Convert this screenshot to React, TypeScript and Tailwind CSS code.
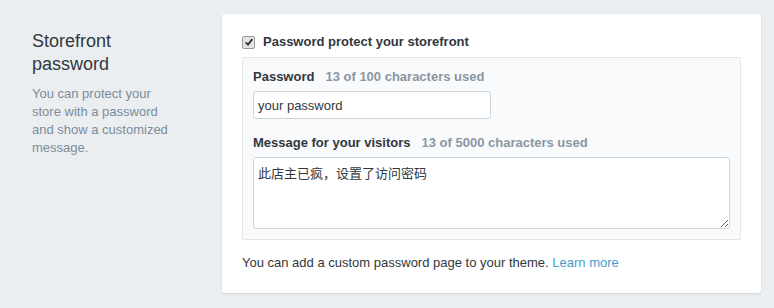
export default function App() {
  return (
    <div className="min-h-[308px] w-[774px] bg-[#ebeef0] pl-[32px] pt-[14px] font-['Liberation_Sans',Arial,sans-serif] text-[13px] text-[#31373d]">
      <div className="flex">
        <div className="w-[190px] shrink-0 pt-[16px]">
          <h2 className="w-[145px] text-[18px] leading-[23px] text-[#31373d]">Storefront password</h2>
          <p className="mt-[9px] w-[145px] leading-[18px] text-[#798c9c]">
            You can protect your store with a password and show a customized message.
          </p>
        </div>
        <div className="w-[539px] rounded-[3px] bg-white px-[20px] pb-[20px] pt-[18px] shadow-[0_1px_2px_rgba(0,0,0,0.12)]">
          <label className="flex h-[20px] items-center gap-[8px] font-bold">
            <span className="flex h-[13px] w-[13px] items-center justify-center rounded-[2px] border border-[#9a9a9a] bg-[#e4e4e4]">
              <svg viewBox="0 0 12 12" className="h-[10px] w-[10px]">
                <path d="M2 6.5 L4.8 9.2 L10 2.6" fill="none" stroke="#333" strokeWidth="2.2" />
              </svg>
            </span>
            Password protect your storefront
          </label>
          <div className="mt-[5px] rounded-[2px] border border-[#e3e6e9] bg-[#f9fafb] px-[10px] pb-[10px] pt-[10px]">
            <div className="flex leading-[18px]">
              <span className="font-bold">Password</span>
              <span className="ml-[11px] font-bold text-[#8a97a3]">13 of 100 characters used</span>
            </div>
            <input
              readOnly
              value="your password"
              className="mt-[5px] block h-[28px] w-[238px] rounded-[3px] border border-[#c9d3dc] bg-white px-[4px] text-[13px] text-[#31373d] outline-none"
            />
            <div className="mt-[15px] flex leading-[18px]">
              <span className="font-bold">Message for your visitors</span>
              <span className="ml-[11px] font-bold text-[#8a97a3]">13 of 5000 characters used</span>
            </div>
            <textarea
              readOnly
              value="此店主已疯，设置了访问密码"
              className="mt-[5px] block h-[72px] w-full resize-y rounded-[3px] border border-[#c9d3dc] bg-white px-[4px] py-[5px] font-['Noto_Sans_CJK_SC',sans-serif] text-[13px] leading-[20px] text-[#31373d] outline-none"
            />
          </div>
          <p className="mt-[13px] leading-[20px]">
            You can add a custom password page to your theme.{" "}
            <a href="#" className="text-[#479ccf]">Learn more</a>
          </p>
        </div>
      </div>
    </div>
  );
}
